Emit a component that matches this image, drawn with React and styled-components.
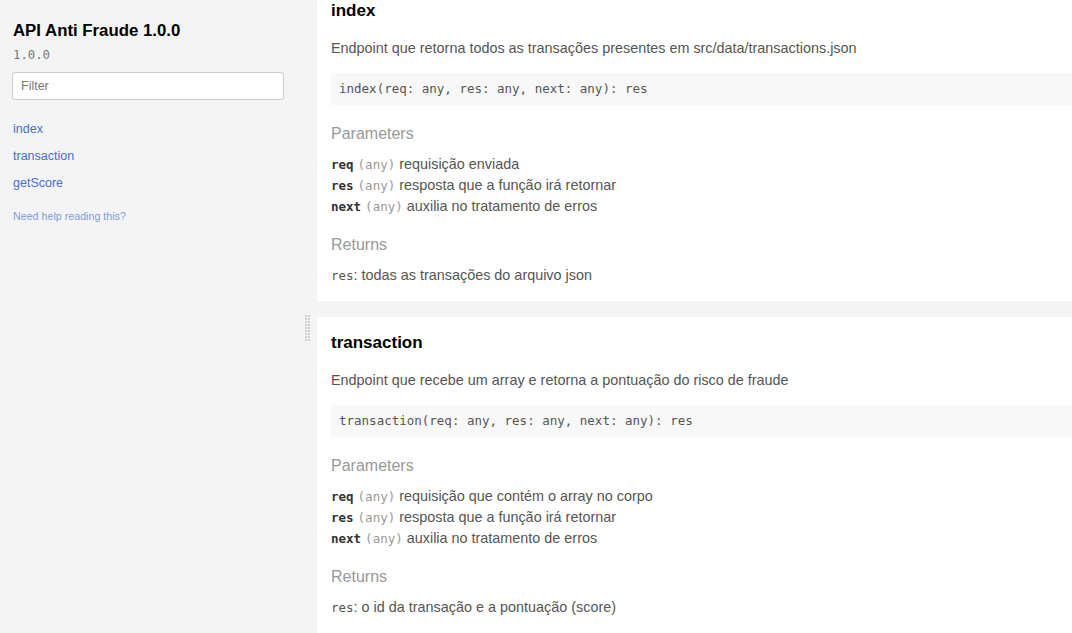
import React from 'react';
import styled, { createGlobalStyle } from 'styled-components';

const GlobalStyle = createGlobalStyle`
  html, body {
    margin: 0;
    padding: 0;
    height: 100%;
    overflow: hidden;
  }
  body {
    font-family: "Liberation Sans", Arial, sans-serif;
    background: #f4f4f4;
  }
`;

const Layout = styled.div`
  display: flex;
  flex-direction: row;
  height: 100vh;
  overflow: hidden;
  background: #f4f4f4;
`;

const Sidebar = styled.nav`
  width: 300px;
  flex-shrink: 0;
  padding: 21px 16px 0 12px;
  box-sizing: border-box;
  background: #f4f4f4;
  display: flex;
  flex-direction: column;
`;

const Title = styled.h3`
  margin: 0 0 0 1px;
  font-size: 16.8px;
  line-height: 20px;
  font-weight: bold;
  color: #000;
`;

const Version = styled.div`
  margin: 6px 0 0 1px;
  font-family: "DejaVu Sans Mono", "Liberation Mono", monospace;
  font-size: 12.3px;
  line-height: 16px;
  color: #777;
`;

const FilterInput = styled.input`
  margin-top: 9px;
  height: 28px;
  box-sizing: border-box;
  width: 272px;
  border: 1px solid #cccccc;
  border-radius: 3px;
  background: #fff;
  padding: 0 8px;
  font-family: "Liberation Sans", Arial, sans-serif;
  font-size: 12.5px;
  color: #333;
  outline: none;
  &::placeholder {
    color: #777;
  }
`;

const NavList = styled.div`
  margin-top: 20px;
  display: flex;
  flex-direction: column;
  gap: 9px;
`;

const NavLink = styled.a`
  margin-left: 1px;
  font-size: 12.5px;
  line-height: 18px;
  color: #4a6cd4;
  text-decoration: none;
  cursor: pointer;
`;

const HelpLink = styled.a`
  margin: 17px 0 0 1px;
  font-size: 10.7px;
  line-height: 14px;
  color: #7d9be0;
  text-decoration: none;
`;

const Gutter = styled.div`
  width: 17px;
  flex-shrink: 0;
  padding-top: 315px;
  box-sizing: border-box;
  display: flex;
  justify-content: flex-start;
  padding-left: 5px;
`;

const Main = styled.main`
  flex: 1;
  overflow: hidden;
  display: flex;
  flex-direction: column;
  gap: 16px;
  margin-top: -15px;
`;

const Section = styled.section`
  background: #fff;
  padding: 16px 0 15px 14px;
  display: flex;
  flex-direction: column;
`;

const Heading = styled.h3`
  margin: 0;
  font-size: 17px;
  line-height: 20px;
  font-weight: bold;
  color: #000;
`;

const Description = styled.p`
  margin: 17px 0 0;
  font-size: 14.4px;
  line-height: 20px;
  color: #555;
`;

const Signature = styled.pre`
  margin: 15px 0 0;
  padding: 7px 8px;
  background: #f8f8f8;
  font-family: "DejaVu Sans Mono", "Liberation Mono", monospace;
  font-size: 12.5px;
  line-height: 18px;
  color: #555;
`;

const SubHeading = styled.div`
  margin-top: ${props => props.gap}px;
  font-size: 16px;
  line-height: 20px;
  color: #999;
`;

const ParamList = styled.div`
  margin-top: 10px;
  display: flex;
  flex-direction: column;
`;

const ParamRow = styled.div`
  font-size: 14.4px;
  line-height: 21px;
  color: #555;
`;

const Code = styled.code`
  font-family: "DejaVu Sans Mono", "Liberation Mono", monospace;
  font-size: 12.5px;
  font-weight: ${props => (props.bold ? 'bold' : 'normal')};
  color: ${props => props.color || '#555'};
`;

const ReturnLine = styled.div`
  margin-top: 10px;
  font-size: 14.4px;
  line-height: 20px;
  color: #555;
`;

const Grip = () => (
  <svg width="6" height="27" viewBox="0 0 6 27">
    {Array.from({ length: 9 }).map((_, row) => (
      <g key={row} fill="#cfcfcf">
        <rect x="0" y={row * 3} width="2" height="2" />
        <rect x="3" y={row * 3} width="2" height="2" />
      </g>
    ))}
  </svg>
);

const endpoints = [
  {
    name: 'index',
    description: 'Endpoint que retorna todos as transações presentes em src/data/transactions.json',
    signature: 'index(req: any, res: any, next: any): res',
    params: [
      { name: 'req', text: 'requisição enviada' },
      { name: 'res', text: 'resposta que a função irá retornar' },
      { name: 'next', text: 'auxilia no tratamento de erros' },
    ],
    returns: 'todas as transações do arquivo json',
  },
  {
    name: 'transaction',
    description: 'Endpoint que recebe um array e retorna a pontuação do risco de fraude',
    signature: 'transaction(req: any, res: any, next: any): res',
    params: [
      { name: 'req', text: 'requisição que contém o array no corpo' },
      { name: 'res', text: 'resposta que a função irá retornar' },
      { name: 'next', text: 'auxilia no tratamento de erros' },
    ],
    returns: 'o id da transação e a pontuação (score)',
  },
];

const Endpoint = ({ item }) => (
  <Section id={item.name}>
    <Heading>{item.name}</Heading>
    <Description>{item.description}</Description>
    <Signature>{item.signature}</Signature>
    <SubHeading gap={19}>Parameters</SubHeading>
    <ParamList>
      {item.params.map(p => (
        <ParamRow key={p.name}>
          <Code bold color="#333">{p.name}</Code>
          {' '}
          <Code color="#999">(any)</Code>
          {' '}
          {p.text}
        </ParamRow>
      ))}
    </ParamList>
    <SubHeading gap={18}>Returns</SubHeading>
    <ReturnLine>
      <Code>res</Code>
      {': '}
      {item.returns}
    </ReturnLine>
  </Section>
);

const App = () => (
  <>
    <GlobalStyle />
    <Layout>
      <Sidebar>
        <Title>API Anti Fraude 1.0.0</Title>
        <Version>1.0.0</Version>
        <FilterInput type="text" placeholder="Filter" />
        <NavList>
          <NavLink href="#index">index</NavLink>
          <NavLink href="#transaction">transaction</NavLink>
          <NavLink href="#getScore">getScore</NavLink>
        </NavList>
        <HelpLink href="#help">Need help reading this?</HelpLink>
      </Sidebar>
      <Gutter>
        <Grip />
      </Gutter>
      <Main>
        {endpoints.map(item => <Endpoint key={item.name} item={item} />)}
      </Main>
    </Layout>
  </>
);

export default App;
